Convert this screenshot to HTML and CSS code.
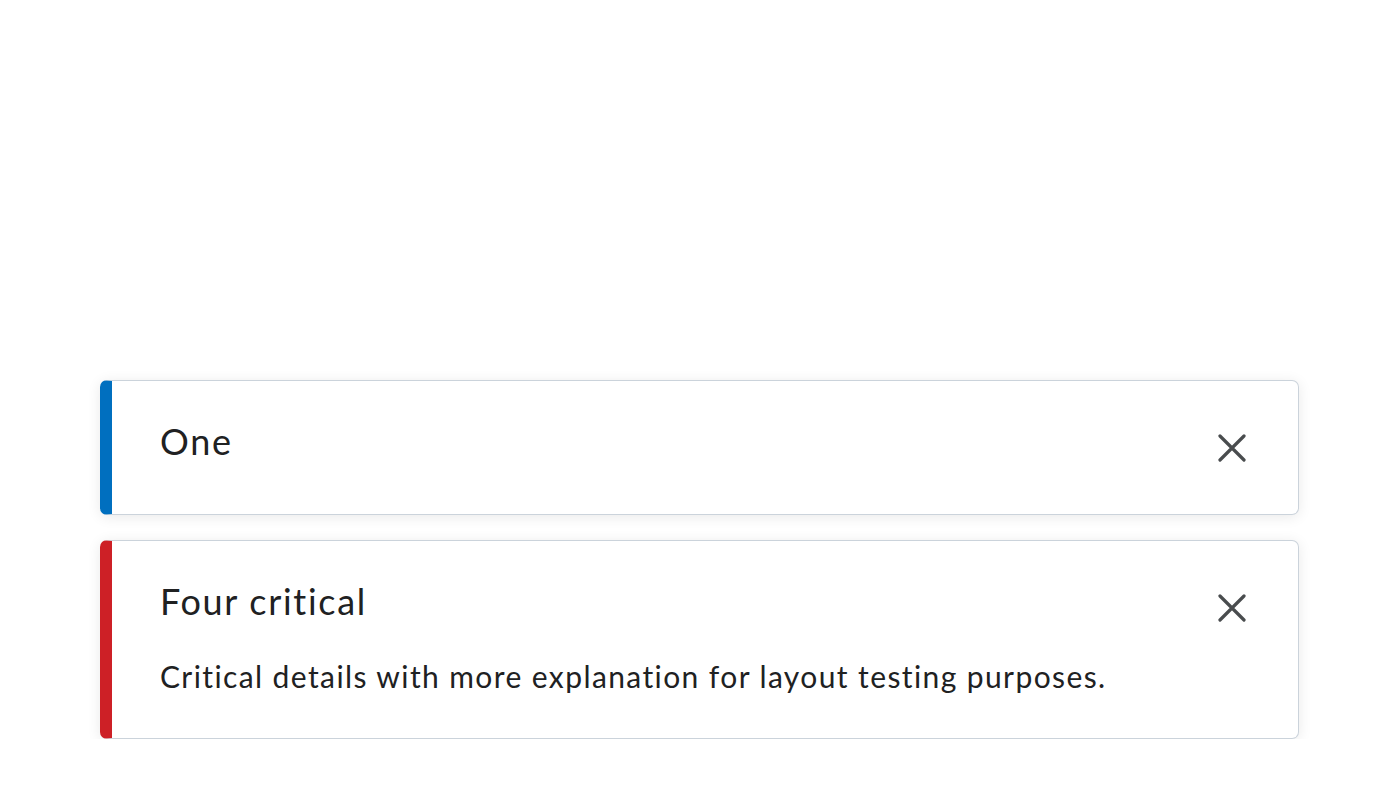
FILE: index.html
```html
<!DOCTYPE html>
<html>
<head>
<meta charset="utf-8">
<link rel="stylesheet" href="styles.css">
</head>
<body>
<main class="stack">
  <div class="alert alert-info">
    <div class="alert-content">
      <div class="alert-title">One</div>
    </div>
    <button class="alert-close" aria-label="Close">
      <svg viewBox="0 0 28 28" width="28" height="28"><path d="M2 2 L26 26 M26 2 L2 26" stroke="#494c4e" stroke-width="3.2" stroke-linecap="round" fill="none"/></svg>
    </button>
  </div>
  <div class="alert alert-critical">
    <div class="alert-content">
      <div class="alert-title">Four critical</div>
      <div class="alert-body">Critical details with more explanation for layout testing purposes.</div>
    </div>
    <button class="alert-close" aria-label="Close">
      <svg viewBox="0 0 28 28" width="28" height="28"><path d="M2 2 L26 26 M26 2 L2 26" stroke="#494c4e" stroke-width="3.2" stroke-linecap="round" fill="none"/></svg>
    </button>
  </div>
</main>
</body>
</html>
```
FILE: styles.css
```css
html, body {
  margin: 0;
  padding: 0;
  background: #ffffff;
}
body {
  font-family: Lato, "Noto Sans", sans-serif;
  color: #202122;
}
.stack {
  display: flex;
  flex-direction: column;
  gap: 25px;
  padding: 380px 101px 0 100px;
}
.alert {
  display: flex;
  align-items: flex-start;
  background: #ffffff;
  border: 1px solid #cbd3db;
  border-left-width: 12px;
  border-radius: 7px;
  box-shadow: 0 2px 14px rgba(0, 0, 0, 0.09);
  min-height: 135px;
  box-sizing: border-box;
}
.alert-info { border-left-color: #006fbf; }
.alert-critical { border-left-color: #cd2026; }
.alert-content {
  flex: 1;
  padding: 33px 0 39px 48px;
}
.alert-title {
  font-size: 36px;
  line-height: 54px;
  letter-spacing: 1.7px;
}
.alert-body {
  margin-top: 26px;
  font-size: 30px;
  line-height: 45px;
  letter-spacing: 1.4px;
}
.alert-close {
  flex: none;
  margin: 53px 52px 0 0;
  padding: 0;
  border: 0;
  background: transparent;
  width: 28px;
  height: 28px;
  display: flex;
}
```
